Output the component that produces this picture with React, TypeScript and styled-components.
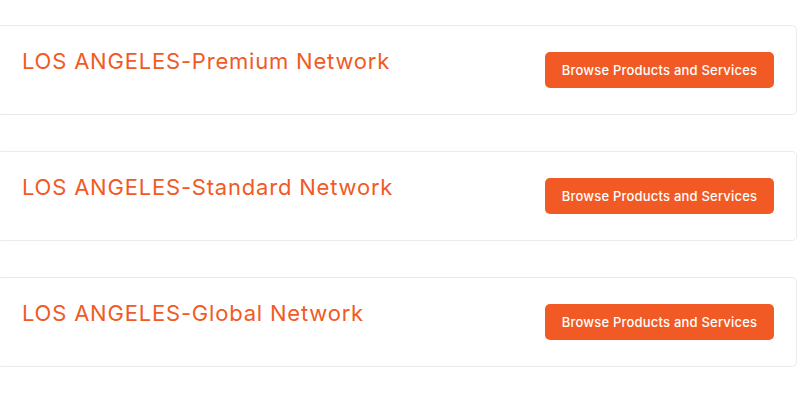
import styled, { createGlobalStyle } from "styled-components";

const ORANGE = "#f15a24";

const networks = ["Premium", "Standard", "Global"];

const GlobalStyle = createGlobalStyle`
  body {
    margin: 0;
    background: #ffffff;
    font-family: Inter, "Noto Sans", sans-serif;
  }
`;

const Page = styled.div`
  display: flex;
  flex-direction: column;
  gap: 36px;
  padding-top: 25px;
  width: 811px;
  height: 406px;
  box-sizing: border-box;
  overflow: hidden;
`;

const Card = styled.div`
  display: flex;
  align-items: center;
  justify-content: space-between;
  box-sizing: border-box;
  height: 90px;
  width: 801px;
  margin-left: -4px;
  padding: 0 22px 0 25px;
  border: 1px solid #ebebeb;
  border-radius: 5px;
  background: #fff;
`;

const Title = styled.h3`
  margin: 0 0 19px 0;
  font-size: 22px;
  font-weight: 400;
  line-height: 30px;
  letter-spacing: 0.8px;
  color: ${ORANGE};
`;

const BrowseButton = styled.button`
  border: none;
  border-radius: 5px;
  background: ${ORANGE};
  color: #fff;
  height: 36px;
  width: 229px;
  padding: 0;
  font-family: inherit;
  font-size: 13px;
  font-weight: 500;
  letter-spacing: 0.2px;
  cursor: pointer;
`;

export default function App() {
  return (
    <>
      <GlobalStyle />
      <Page>
        {networks.map((n) => (
          <Card key={n}>
            <Title>LOS ANGELES-{n} Network</Title>
            <BrowseButton>Browse Products and Services</BrowseButton>
          </Card>
        ))}
      </Page>
    </>
  );
}
